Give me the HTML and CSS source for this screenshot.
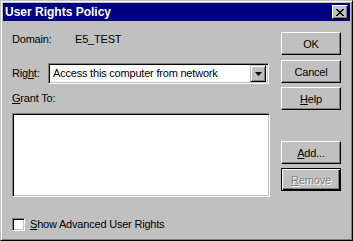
FILE: index.html
```html
<!DOCTYPE html>
<html>
<head>
<meta charset="utf-8">
<link rel="stylesheet" href="styles.css">
</head>
<body>
<div class="window">
  <div class="titlebar">
    <span class="title">User Rights Policy</span>
    <button class="close" aria-label="Close">
      <svg width="8" height="7" viewBox="0 0 8 7"><path d="M0 0h2v1h1v1h2V1h1V0h2v1H7v1H6v1H5v1h1v1h1v1h1v1H6V6H5V5H3v1H2v1H0V6h1V5h1V4h1V3H2V2H1V1H0z" fill="#000"/></svg>
    </button>
  </div>
  <div class="content">
    <div class="left">
      <div class="row domain"><span class="lbl-domain">Domain:</span><span>E5_TEST</span></div>
      <div class="row right-row">
        <span class="lbl-right">Rig<u>h</u>t:</span>
        <div class="combo">
          <span class="combo-text">Access this computer from network</span>
          <span class="drop"><svg width="7" height="4" viewBox="0 0 7 4"><path d="M0 0h7L3.5 4z" fill="#000"/></svg></span>
        </div>
      </div>
      <div class="row grant"><u>G</u>rant To:</div>
      <div class="listbox"></div>
      <label class="check-row"><span class="checkbox"></span><span><u>S</u>how Advanced User Rights</span></label>
    </div>
    <div class="buttons">
      <button class="btn ok">OK</button>
      <button class="btn cancel">Cancel</button>
      <button class="btn help"><u>H</u>elp</button>
      <button class="btn add"><u>A</u>dd...</button>
      <button class="btn remove" disabled><u>R</u>emove</button>
    </div>
  </div>
</div>
</body>
</html>
```
FILE: styles.css
```css
* { box-sizing: border-box; }
html, body { margin: 0; padding: 0; background: #c0c0c0; }
body { font-family: "Liberation Sans", Arial, sans-serif; font-size: 11px; letter-spacing: -0.2px; color: #000; }
u { text-decoration: underline; text-underline-offset: 1px; }

.window {
  width: 353px; height: 241px;
  background: #c0c0c0;
  border: 1px solid; border-color: #c0c0c0 #000 #000 #c0c0c0;
  box-shadow: inset 1px 1px #fff, inset -1px -1px #808080;
  padding: 2px;
  display: flex; flex-direction: column;
}
.titlebar {
  height: 18px; background: #000080; color: #fff;
  display: flex; align-items: center; justify-content: space-between;
  padding: 0 2px 0 2px;
}
.title { font-weight: bold; font-size: 12px; letter-spacing: 0; line-height: 14px; }
.close {
  width: 16px; height: 14px; padding: 0; margin: 0;
  background: #c0c0c0; border: 1px solid; border-color: #fff #000 #000 #fff;
  box-shadow: inset -1px -1px #808080;
  display: flex; align-items: center; justify-content: center;
}
.close svg { display: block; margin-left: -1px; }

.content { display: flex; padding-left: 9px; gap: 11px; flex: 1; }
.left { width: 258px; display: flex; flex-direction: column; padding-top: 12px; }
.row { line-height: 13px; height: 13px; }
.domain { display: flex; }
.lbl-domain { width: 63px; }
.right-row { display: flex; align-items: center; height: 21px; margin-top: 17px; }
.lbl-right { width: 36px; }
.combo {
  width: 221px; height: 21px; background: #fff;
  border: 1px solid; border-color: #808080 #fff #fff #808080;
  box-shadow: inset 1px 1px #000, inset -1px -1px #c0c0c0;
  display: flex; align-items: center; padding: 2px;
}
.combo-text { flex: 1; padding-left: 2px; }
.drop {
  width: 16px; height: 17px; background: #c0c0c0;
  border: 1px solid; border-color: #c0c0c0 #000 #000 #c0c0c0;
  box-shadow: inset 1px 1px #fff, inset -1px -1px #808080;
  display: flex; align-items: center; justify-content: center;
}
.drop svg { display: block; }
.grant { margin-top: 8px; }
.listbox {
  width: 258px; height: 84px; margin-top: 8px; background: #fff;
  border: 1px solid; border-color: #808080 #fff #fff #808080;
  box-shadow: inset 1px 1px #000, inset -1px -1px #c0c0c0;
}
.check-row { display: flex; align-items: center; margin-top: 21px; line-height: 13px; }
.checkbox {
  width: 13px; height: 13px; background: #fff; margin-right: 5px;
  border: 1px solid; border-color: #808080 #fff #fff #808080;
  box-shadow: inset 1px 1px #000, inset -1px -1px #c0c0c0;
}

.buttons { width: 60px; display: flex; flex-direction: column; padding-top: 11px; }
.btn {
  width: 60px; height: 23px; padding: 0; margin: 0;
  font: inherit; letter-spacing: inherit; color: #000;
  background: #c0c0c0; border: 1px solid; border-color: #fff #000 #000 #fff;
  box-shadow: inset -1px -1px #808080;
}
.cancel { margin-top: 5px; }
.help { margin-top: 4px; }
.add { margin-top: 31px; }
.remove {
  margin-top: 4px; border-color: #000;
  box-shadow: inset 1px 1px #fff, inset -1px -1px #000, inset -2px -2px #808080;
  color: #808080; text-shadow: 1px 1px #fff;
}
```
